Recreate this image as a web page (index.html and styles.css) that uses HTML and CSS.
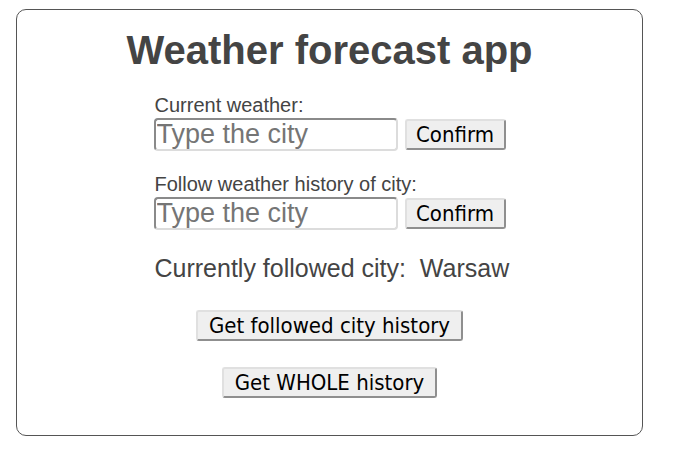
FILE: index.html
```html
<!DOCTYPE html>
<html>
<head>
<meta charset="utf-8">
<link rel="stylesheet" href="styles.css">
</head>
<body>
<div class="card">
  <h1 class="title">Weather forecast app</h1>
  <div class="form">
    <div class="field">
      <label class="label">Current weather:</label>
      <div class="row">
        <input class="city" type="text" placeholder="Type the city">
        <button class="btn">Confirm</button>
      </div>
    </div>
    <div class="field">
      <label class="label">Follow weather history of city:</label>
      <div class="row">
        <input class="city" type="text" placeholder="Type the city">
        <button class="btn">Confirm</button>
      </div>
    </div>
    <div class="followed">Currently followed city:&nbsp; Warsaw</div>
  </div>
  <div class="actions">
    <button class="btn">Get followed city history</button>
    <button class="btn">Get WHOLE history</button>
  </div>
</div>
</body>
</html>
```
FILE: styles.css
```css
body {
  margin: 9px 0 0 16px;
  font-family: "Liberation Sans", Arial, sans-serif;
  color: #444;
  background: #fff;
}
.card {
  box-sizing: border-box;
  width: 627px;
  height: 427px;
  border: 1px solid #555;
  border-radius: 10px;
  padding-top: 17px;
  display: flex;
  flex-direction: column;
  align-items: center;
}
.title {
  margin: 0;
  font-size: 40px;
  line-height: 46px;
  font-weight: bold;
  color: #444;
}
.form {
  width: 352px;
  margin-top: 19px;
  display: flex;
  flex-direction: column;
}
.field {
  display: flex;
  flex-direction: column;
  margin-bottom: 20px;
}
.label {
  font-size: 20px;
  line-height: 26px;
  color: #444;
  padding-left: 1px;
  white-space: nowrap;
}
.row {
  display: flex;
  align-items: center;
  gap: 7px;
}
.city {
  box-sizing: border-box;
  width: 244px;
  height: 33px;
  margin: 0;
  padding: 0 1px;
  border: 2px solid;
  border-color: #8a8a8a #dcdcdc #dcdcdc #8a8a8a;
  border-radius: 4px;
  font-family: "Liberation Sans", Arial, sans-serif;
  font-size: 27px;
  color: #222;
  background: #fff;
}
.city::placeholder {
  color: #757575;
}
.btn {
  box-sizing: border-box;
  height: 31px;
  margin: 0;
  padding: 0 11px;
  border: 2px solid;
  border-color: #e0e0e0 #8f8f8f #8f8f8f #e0e0e0;
  border-radius: 3px;
  background: #efefef;
  font-family: "DejaVu Sans", Tahoma, sans-serif;
  font-stretch: condensed;
  font-size: 22px;
  color: #000;
}
.row .btn {
  width: 102px;
  padding: 0;
}
.followed {
  margin-top: 3px;
  font-size: 25px;
  line-height: 30px;
  color: #444;
  white-space: nowrap;
  padding-left: 1px;
}
.actions {
  display: flex;
  flex-direction: column;
  align-items: center;
  gap: 26px;
  margin-top: 27px;
}
```
